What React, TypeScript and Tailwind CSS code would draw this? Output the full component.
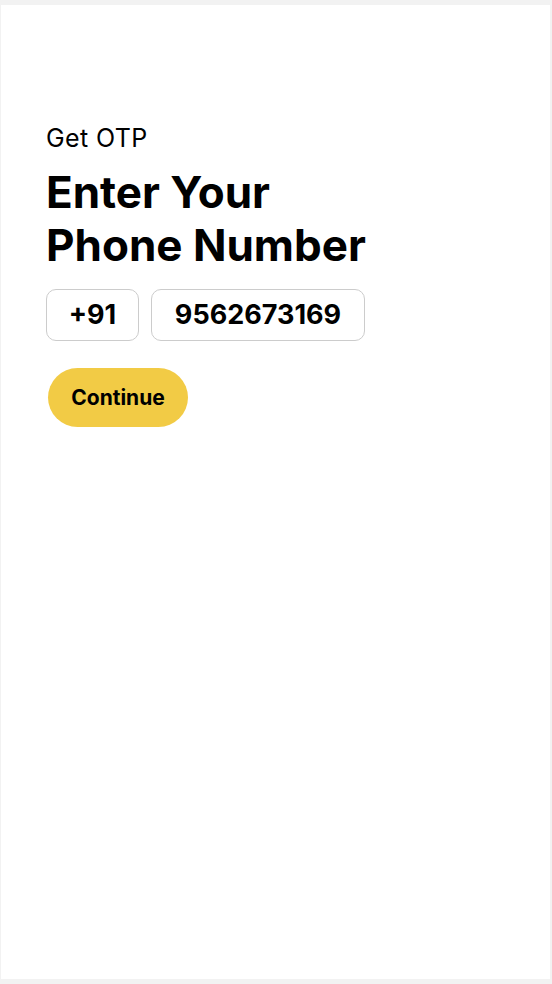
export default function App() {
  return (
    <div className="min-h-screen bg-[#f2f2f2] pt-[5px] pb-[5px] pl-[1px] pr-[2px]">
      <div className="h-[974px] bg-white pl-[45px] pt-[117px] font-['Inter',sans-serif] text-black">
        <p className="text-[25px] leading-[32px] tracking-[0.4px]">Get OTP</p>
        <h1 className="mt-[12px] text-[44px] font-bold leading-[53px]">
          Enter Your
          <br />
          Phone Number
        </h1>
        <div className="mt-[17px] flex gap-[12px]">
          <div className="flex h-[52px] w-[93px] items-center justify-center rounded-[10px] border border-[#cccccc] text-[27px] font-bold">
            +91
          </div>
          <div className="flex h-[52px] w-[214px] items-center justify-center rounded-[10px] border border-[#cccccc] text-[27px] font-bold">
            9562673169
          </div>
        </div>
        <button className="mt-[27px] ml-[2px] flex h-[59px] w-[140px] items-center justify-center rounded-full bg-[#f2cb45] text-[21px] font-bold">
          Continue
        </button>
      </div>
    </div>
  );
}
